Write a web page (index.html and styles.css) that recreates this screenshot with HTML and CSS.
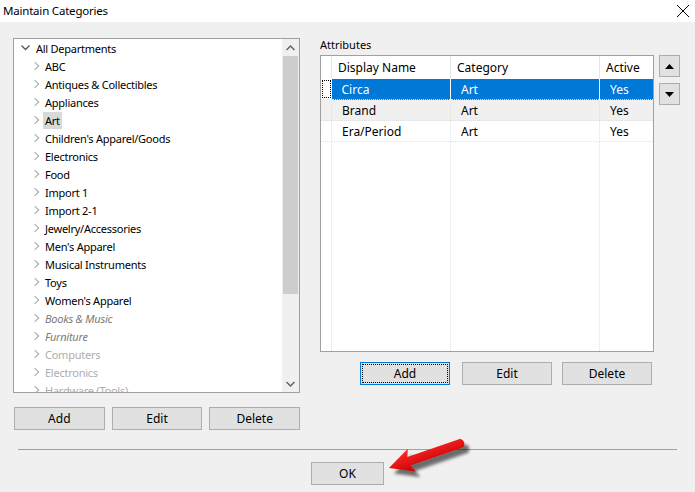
FILE: index.html
```html
<!DOCTYPE html>
<html lang="en">

<head>
    <meta charset="UTF-8">
    <title>Maintain Categories</title>
    <link rel="stylesheet" href="styles.css">
</head>

<body>
    <div class="window">
        <!-- Title bar -->
        <div class="titlebar">
            <span class="title">Maintain Categories</span>
            <svg class="close" width="14" height="14" viewBox="0 0 14 14">
                <path d="M1 1 L13 13 M13 1 L1 13" stroke="#000" stroke-width="1" fill="none" />
            </svg>
        </div>

        <div class="client">
            <div class="panes">
                <!-- Category tree -->
                <section class="left-pane">
                    <div class="tree-box">
                        <ul class="tree">
                            <li class="root">
                                <svg class="chev-down" width="9" height="6" viewBox="0 0 9 6"><path d="M0.5 0.5 L4.5 4.5 L8.5 0.5" stroke="#555" stroke-width="1.3" fill="none" /></svg>
                                <span>All Departments</span>
                            </li>
                            <li><i class="chev"></i><span>ABC</span></li>
                            <li><i class="chev"></i><span>Antiques &amp; Collectibles</span></li>
                            <li><i class="chev"></i><span>Appliances</span></li>
                            <li class="selected"><i class="chev"></i><span>Art</span></li>
                            <li><i class="chev"></i><span>Children's Apparel/Goods</span></li>
                            <li><i class="chev"></i><span>Electronics</span></li>
                            <li><i class="chev"></i><span>Food</span></li>
                            <li><i class="chev"></i><span>Import 1</span></li>
                            <li><i class="chev"></i><span>Import 2-1</span></li>
                            <li><i class="chev"></i><span>Jewelry/Accessories</span></li>
                            <li><i class="chev"></i><span>Men's Apparel</span></li>
                            <li><i class="chev"></i><span>Musical Instruments</span></li>
                            <li><i class="chev"></i><span>Toys</span></li>
                            <li><i class="chev"></i><span>Women's Apparel</span></li>
                            <li class="inactive"><i class="chev"></i><span>Books &amp; Music</span></li>
                            <li class="inactive"><i class="chev"></i><span>Furniture</span></li>
                            <li class="disabled"><i class="chev"></i><span>Computers</span></li>
                            <li class="disabled"><i class="chev"></i><span>Electronics</span></li>
                            <li class="disabled"><i class="chev"></i><span>Hardware (Tools)</span></li>
                        </ul>
                        <div class="scrollbar">
                            <div class="sb-arrow">
                                <svg width="9" height="6" viewBox="0 0 9 6"><path d="M0.5 5 L4.5 1 L8.5 5" stroke="#606060" stroke-width="1.4" fill="none" /></svg>
                            </div>
                            <div class="sb-track">
                                <div class="sb-thumb"></div>
                            </div>
                            <div class="sb-arrow">
                                <svg width="9" height="6" viewBox="0 0 9 6"><path d="M0.5 1 L4.5 5 L8.5 1" stroke="#606060" stroke-width="1.4" fill="none" /></svg>
                            </div>
                        </div>
                    </div>
                    <div class="btn-row tree-buttons">
                        <button class="btn">Add</button>
                        <button class="btn">Edit</button>
                        <button class="btn">Delete</button>
                    </div>
                </section>

                <!-- Attributes grid -->
                <section class="right-pane">
                    <div class="label">Attributes</div>
                    <div class="grid-area">
                        <div class="grid-box">
                            <table class="grid">
                                <thead>
                                    <tr>
                                        <th class="rh"></th>
                                        <th class="c-name">Display Name</th>
                                        <th class="c-cat">Category</th>
                                        <th class="c-act">Active</th>
                                    </tr>
                                </thead>
                                <tbody>
                                    <tr class="sel">
                                        <td class="rh"><span class="focus-rect"></span></td>
                                        <td>Circa</td>
                                        <td>Art</td>
                                        <td>Yes</td>
                                    </tr>
                                    <tr class="alt">
                                        <td class="rh"></td>
                                        <td>Brand</td>
                                        <td>Art</td>
                                        <td>Yes</td>
                                    </tr>
                                    <tr>
                                        <td class="rh"></td>
                                        <td>Era/Period</td>
                                        <td>Art</td>
                                        <td>Yes</td>
                                    </tr>
                                    <tr class="filler">
                                        <td class="rh"></td>
                                        <td></td>
                                        <td></td>
                                        <td></td>
                                    </tr>
                                </tbody>
                            </table>
                        </div>
                        <div class="move-buttons">
                            <button class="btn-move">
                                <svg width="9" height="5" viewBox="0 0 9 5"><path d="M0 5 L4.5 0 L9 5 Z" fill="#000" /></svg>
                            </button>
                            <button class="btn-move">
                                <svg width="9" height="5" viewBox="0 0 9 5"><path d="M0 0 L4.5 5 L9 0 Z" fill="#000" /></svg>
                            </button>
                        </div>
                    </div>
                    <div class="btn-row grid-buttons">
                        <button class="btn focused"><span>Add</span></button>
                        <button class="btn">Edit</button>
                        <button class="btn">Delete</button>
                    </div>
                </section>
            </div>

            <div class="separator"></div>

            <div class="footer">
                <button class="btn btn-ok">OK</button>
            </div>
        </div>

        <!-- Callout arrow -->
        <svg class="callout" width="695" height="492" viewBox="0 0 695 492">
            <defs>
                <linearGradient id="redFill" x1="0" y1="0" x2="0" y2="1">
                    <stop offset="0" stop-color="#ff2a2a" />
                    <stop offset="1" stop-color="#c80000" />
                </linearGradient>
                <filter id="blur" x="-20%" y="-50%" width="140%" height="200%">
                    <feGaussianBlur stdDeviation="1.6" />
                </filter>
            </defs>
            <g transform="translate(392 471) rotate(-19)">
                <path d="M0 0 L24 -12 L21 -4.5 L77 -4.5 Q82 0 77 4.5 L21 4.5 L24 12 Z" fill="#000" opacity="0.55" filter="url(#blur)" transform="translate(1 3)" />
            </g>
            <g transform="translate(389 468) rotate(-19)">
                <path d="M0 0 L24 -12 L21 -4.5 L77 -4.5 Q82 0 77 4.5 L21 4.5 L24 12 Z" fill="url(#redFill)" />
            </g>
        </svg>
    </div>
</body>

</html>
```

FILE: styles.css
```css
/* Basic Styles */
html,
body {
    margin: 0;
    padding: 0;
}

body {
    font-family: "Noto Sans", "Open Sans", sans-serif;
    font-size: 11px;
    color: #000;
    background-color: #f0f0f0;
}

.window {
    position: relative;
    width: 695px;
    height: 492px;
    overflow: hidden;
    display: flex;
    flex-direction: column;
}

/* Title bar */
.titlebar {
    height: 22px;
    box-sizing: border-box;
    background-color: #fff;
    display: flex;
    align-items: center;
    justify-content: space-between;
    padding: 0 5px 2px 3px;
}

.title {
    font-size: 11.5px;
    letter-spacing: -0.2px;
}

.close {
    margin-top: 2px;
}

.client {
    flex: 1;
    background-color: #f0f0f0;
    display: flex;
    flex-direction: column;
}

.panes {
    display: flex;
    padding: 16px 0 0 13px;
}

/* Left pane: tree */
.left-pane {
    width: 287px;
}

.tree-box {
    height: 355px;
    box-sizing: border-box;
    border: 1px solid #a0a0a0;
    background-color: #fff;
    display: flex;
    overflow: hidden;
}

.tree {
    flex: 1;
    list-style: none;
    margin: 0;
    padding: 0;
    overflow: hidden;
}

.tree li {
    height: 18px;
    display: flex;
    align-items: center;
    padding-left: 18px;
    white-space: nowrap;
    letter-spacing: -0.25px;
}

.tree li.root {
    padding-left: 7px;
}

.tree li.root span {
    margin-left: 4px;
}

.tree li span {
    padding: 0 2px;
    line-height: 17px;
}

.chev {
    display: inline-block;
    width: 5px;
    height: 5px;
    border-top: 1.6px solid #a6a6a6;
    border-right: 1.6px solid #a6a6a6;
    transform: rotate(45deg);
    margin: 0 5px 0 0;
}

.tree li.selected span {
    background-color: #d9d9d9;
}

.tree li.inactive span {
    font-style: italic;
    color: #7a7a7a;
}

.tree li.disabled span {
    color: #adadad;
}

.scrollbar {
    width: 17px;
    background-color: #f0f0f0;
    display: flex;
    flex-direction: column;
}

.sb-arrow {
    height: 17px;
    display: flex;
    align-items: center;
    justify-content: center;
}

.sb-track {
    flex: 1;
    padding: 0 1px;
}

.sb-thumb {
    height: 238px;
    background-color: #cdcdcd;
}

/* Buttons */
.btn-row {
    display: flex;
}

.btn {
    height: 23px;
    box-sizing: border-box;
    border: 1px solid #adadad;
    background-color: #e1e1e1;
    font-family: inherit;
    font-size: 12px;
    color: #000;
    padding: 0;
    cursor: pointer;
}

.tree-buttons {
    margin-top: 14px;
    padding-left: 1px;
    gap: 7px;
}

.tree-buttons .btn {
    width: 91px;
}

.btn.focused {
    border-color: #0078d7;
    padding: 1px;
}

.btn.focused span {
    display: flex;
    align-items: center;
    justify-content: center;
    height: 100%;
    outline: 1px dotted #000;
    outline-offset: -1px;
}

/* Right pane: attributes grid */
.right-pane {
    margin-left: 20px;
}

.label {
    height: 17px;
    line-height: 14px;
}

.grid-area {
    display: flex;
    gap: 5px;
}

.grid-box {
    width: 334px;
    height: 297px;
    box-sizing: border-box;
    border: 1px solid #a0a0a0;
    background-color: #fff;
    overflow: hidden;
}

.grid {
    border-collapse: collapse;
    width: 332px;
    height: 100%;
    font-size: 12px;
    table-layout: fixed;
}

.grid th {
    height: 22px;
    font-weight: normal;
    text-align: left;
    padding: 0 0 0 6px;
    border-right: 1px solid #e5e5e5;
    border-bottom: 1px solid #ffffff;
}

.grid td {
    height: 20px;
    padding: 0 0 0 10px;
    border-right: 1px dotted #e0e0e0;
    border-bottom: 1px dotted #e0e0e0;
    white-space: nowrap;
}

.grid .rh {
    width: 10px;
    padding: 0;
}

.grid .c-name {
    width: 112px;
}

.grid .c-cat {
    width: 142px;
}

.grid .c-act {
    border-right: none;
}

.grid td:last-child {
    border-right: none;
}

.grid tr.sel td {
    background-color: #0078d7;
    color: #fff;
    border-right: 1px solid #fff;
}

.grid tr.sel td.rh {
    background-color: #fff;
    border-right: none;
}

.grid tr.sel td:last-child {
    border-right: none;
}

.focus-rect {
    display: block;
    height: 18px;
    margin: 0 1px 0 1px;
    outline: 1px dotted #000;
    outline-offset: -1px;
}

.grid tr.alt td {
    background-color: #f0f0f0;
}

.grid tr.filler td {
    height: auto;
    border-bottom: none;
}

.move-buttons {
    display: flex;
    flex-direction: column;
    gap: 6px;
}

.btn-move {
    width: 21px;
    height: 22px;
    box-sizing: border-box;
    border: 1px solid #adadad;
    background-color: #e1e1e1;
    padding: 0;
    display: flex;
    align-items: center;
    justify-content: center;
}

.grid-buttons {
    margin-top: 10px;
    padding-left: 40px;
}

.grid-buttons .btn {
    width: 90px;
}

.grid-buttons .btn + .btn {
    margin-left: 12px;
}

.grid-buttons .btn:last-child {
    margin-left: 10px;
}

/* Footer */
.separator {
    margin: 19px 18px 0 18px;
    height: 1px;
    background-color: #a0a0a0;
    width: 659px;
}

.footer {
    padding: 12px 0 0 311px;
}

.btn-ok {
    width: 73px;
}

.callout {
    position: absolute;
    left: 0;
    top: 0;
    pointer-events: none;
}
```
